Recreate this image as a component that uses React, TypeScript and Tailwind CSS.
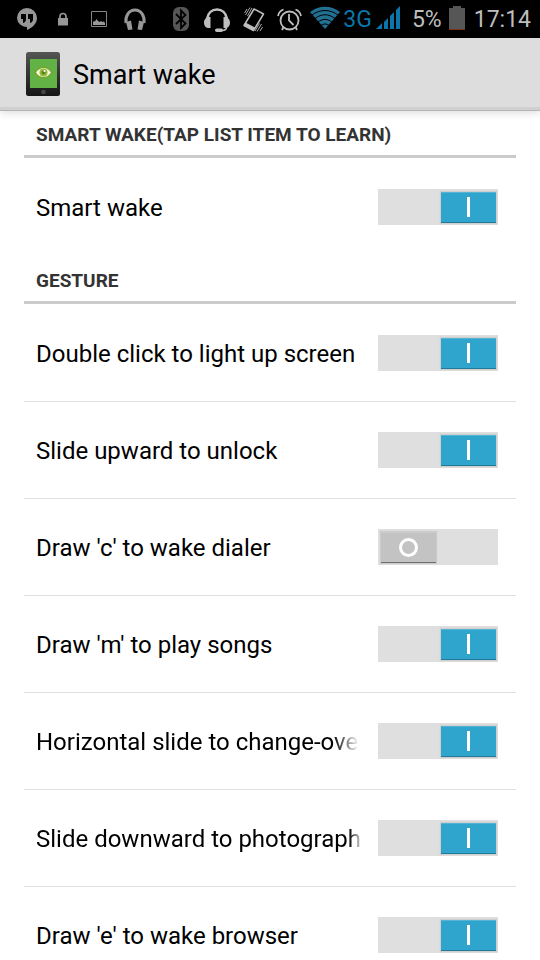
import { useState } from "react";
import type { ReactNode } from "react";

type Item = { label: string; on: boolean; fade?: string };

const wakeItems: Item[] = [{ label: "Smart wake", on: true }];

const gestureItems: Item[] = [
    { label: "Double click to light up screen", on: true },
    { label: "Slide upward to unlock", on: true },
    { label: "Draw 'c' to wake dialer", on: false },
    { label: "Draw 'm' to play songs", on: true },
    {
        label: "Horizontal slide to change-over",
        on: true,
        fade: "[mask-image:linear-gradient(to_left,transparent_4px,black_30px)]",
    },
    {
        label: "Slide downward to photograph",
        on: true,
        fade: "[mask-image:linear-gradient(to_left,transparent,black_14px)]",
    },
    { label: "Draw 'e' to wake browser", on: true },
];

const StatusIcon = ({ children }: { children: ReactNode }) => (
    <svg className="h-[38px] w-9 shrink-0" viewBox="0 0 36 38" fill="none" aria-hidden="true">
        {children}
    </svg>
);

const StatusBar = () => {
    return (
        <div className="flex h-[38px] shrink-0 items-center justify-between bg-black px-[9px] text-[23px] leading-7 text-[#bebebe]">
            <div className="flex">
                {/* hangouts */}
                <StatusIcon>
                    <path fill="#979797" d="M18 8a10 10 0 0 1 10 10c0 5-4 9.500-10 12v-3A9.500 9.500 0 0 1 8 18 10 10 0 0 1 18 8Z" />
                    <path fill="#000" d="M12 14h5v5c0 2-1 3.500-3 4v-4h-2Zm7 0h5v5c0 2-1 3.500-3 4v-4h-2Z" />
                </StatusIcon>
                {/* lock */}
                <StatusIcon>
                    <path fill="#979797" d="M13 18h10v7.500H13Z" />
                    <path stroke="#979797" strokeWidth="1.700" d="M15 18v-1.500a3 3 0 0 1 6 0V18" />
                </StatusIcon>
                {/* picture */}
                <StatusIcon>
                    <path stroke="#858585" d="M10.500 11.500h15v15h-15Z" />
                    <path fill="#979797" d="M12 25v-3l1-1 1 .5 1.500-2.500 1.500 2 1.500 1 1.500-1 1.500 1 1.500-.5 1 1.500v2Z" />
                </StatusIcon>
                {/* headphones */}
                <StatusIcon>
                    <path stroke="#979797" strokeWidth="3" d="M9 23c-1-7 3-13 9-13s10 6 9 13" />
                    <path fill="#979797" d="m9 22 5-1.500 1.500 9-4.500.5Zm18 0-5-1.500-1.500 9 4.500.5Z" />
                </StatusIcon>
            </div>
            <div className="flex items-center">
                {/* bluetooth */}
                <StatusIcon>
                    <rect x="10" y="7" width="16" height="24" rx="6" fill="#565656" />
                    <path stroke="#000" strokeWidth="1.800" d="m13 14 9.500 9.500-4.500 4.500V10.500l4.500 4.500L13 24" />
                </StatusIcon>
                {/* headset */}
                <StatusIcon>
                    <path stroke="#bebebe" strokeWidth="2.600" d="M8 19c1-6 5-9.500 10-9.500S27 13 28 19" />
                    <path fill="#bebebe" d="M11.500 17v11C7 28.500 5 26 5 22.500S7.500 17 11.500 17Zm13 0v11c4.500.5 6.500-2 6.500-5.500S28.500 17 24.500 17Z" />
                    <path stroke="#bebebe" strokeWidth="1.600" d="M27.500 27c0 2.500-1 3.500-4.500 3.500" />
                    <rect x="16" y="28.500" width="8" height="3.500" rx="1.700" fill="#bebebe" />
                </StatusIcon>
                {/* vibrate */}
                <StatusIcon>
                    <path stroke="#bebebe" strokeWidth="1.500" strokeLinejoin="round" d="m19 9 9.500 5-10 16.500-9.500-5Z" />
                    <path fill="#bebebe" d="m10.500 22.500 9.500 5-2 3-9-5Z" />
                    <path stroke="#bebebe" strokeWidth="0.900" d="m10.500 15 4.500-7.500M12.500 16l4.500-8M9.500 13l2.500-4M22 31.500l4.500-7.500M20 31l4.500-7.500M25 31l2.500-4" />
                </StatusIcon>
                {/* alarm */}
                <StatusIcon>
                    <circle cx="18.500" cy="20.500" r="9" stroke="#bebebe" strokeWidth="1.800" />
                    <path stroke="#bebebe" strokeWidth="1.800" d="M18 14v6.500l4.500 4.500M7 16c.5-3 2.500-5.500 5.500-6.500M30 16c-.5-3-2.500-5.500-5.500-6.500" />
                    <path stroke="#bebebe" strokeWidth="1.800" d="m12.500 27-1.500 3m13.500-3 1.500 3" />
                </StatusIcon>
                {/* wifi */}
                <StatusIcon>
                    <path fill="#226f91" d="M3 12C12 5 24 5 33 12L18 29Z" />
                    <path stroke="#000" strokeWidth="1" d="M5 15c8-6 18-6 26 0M8 18.500c6.500-5 13.500-5 20 0M11 22c4.500-3.500 9.500-3.500 14 0M14 25.500c2.500-2 5.500-2 8 0" />
                </StatusIcon>
                <span className="pt-0.5 text-[#0b76aa]">3G</span>
                {/* signal */}
                <svg className="ml-1 h-[38px] w-6" viewBox="0 0 24 38" fill="#0b76aa" aria-hidden="true">
                    <path d="M0 29l6-6v6ZM8 22l4-4v11H8Zm6-6 4-4v17h-4Zm6-6 4-4v23h-4Z" />
                </svg>
                <span className="ml-3 pt-0.5">5%</span>
                {/* battery */}
                <svg className="ml-[7px] h-[38px] w-4" viewBox="0 0 16 38" aria-hidden="true">
                    <path fill="#565656" d="M0 8h4V6h8v2h4v21H0Z" />
                    <path fill="#7d2f18" d="M0 29h16v1H0Z" />
                </svg>
                <span className="ml-[9px] pt-0.5">17:14</span>
            </div>
        </div>
    );
};

const AppIcon = () => (
    <svg className="h-11 w-[34px]" viewBox="0 0 34 44" aria-hidden="true">
        <defs>
            <linearGradient id="body" x1="0" y1="0" x2="0" y2="1">
                <stop offset="0" stopColor="#555755" />
                <stop offset="0.500" stopColor="#333533" />
                <stop offset="1" stopColor="#151515" />
            </linearGradient>
        </defs>
        <rect width="34" height="44" rx="2.500" fill="url(#body)" />
        <path fill="#62b246" d="M4 7h27v29H4Z" />
        <path fill="#77a52b" d="M8 20.500c5-8 14-8 19 0-5 8-14 8-19 0Z" />
        <path fill="#f4f8e4" d="M10 20.500c4-6 11-6 15 0-4 6-11 6-15 0Z" />
        <circle cx="17.500" cy="20.500" r="4" fill="#91bd35" />
        <circle cx="17.500" cy="20.500" r="2" fill="#5d8422" />
        <circle cx="18.500" cy="19" r="1" fill="#fff" />
        <circle cx="17.500" cy="40" r="2.300" fill="#454545" />
    </svg>
);

const ToggleRow = ({ label, on, fade = "" }: Item) => {
    const [checked, setChecked] = useState(on);

    return (
        <li>
            <label className="relative flex h-24 cursor-pointer items-center gap-[15px] pr-[18px] pl-3">
                <span className={`min-w-0 flex-1 overflow-hidden pt-0.5 text-2xl whitespace-nowrap text-black ${fade}`}>{label}</span>
                <input
                    type="checkbox"
                    role="switch"
                    className="peer sr-only"
                    checked={checked}
                    onChange={(e) => setChecked(e.target.checked)}
                />
                <span className="flex h-9 w-[120px] shrink-0 items-center justify-start bg-[#dfdfdf] pr-0.5 pl-[3px] peer-checked:justify-end peer-focus-visible:outline-2">
                    {checked ? (
                        <span className="flex h-[31px] w-[55px] items-center justify-center border-t border-b border-t-[#55b3d3] border-b-[#23799a] bg-[#2fa4cc] shadow-[0_0_1px_1px_#cfcfcf]">
                            <span className="h-5 w-[3px] bg-white"></span>
                        </span>
                    ) : (
                        <span className="flex h-[31px] w-[55px] items-center justify-center border-t border-b border-t-[#cccccc] border-b-[#6e6e6e] bg-[#c3c3c3] shadow-[0_0_1px_1px_#cccccc]">
                            <span className="size-[19px] rounded-full border-3 border-white"></span>
                        </span>
                    )}
                </span>
            </label>
        </li>
    );
};

const Section = ({ title, items }: { title: string; items: Item[] }) => (
    <section className="pb-px">
        <h2 className="flex h-12 items-center border-b-3 border-[#cbcbcb] pt-1 pl-3 text-[19px] leading-6 font-bold text-[#333333] uppercase">
            {title}
        </h2>
        <ul className="divide-y divide-[#e0e0e0] pt-px">
            {items.map((item) => (
                <ToggleRow key={item.label} {...item} />
            ))}
        </ul>
    </section>
);

const App = () => {
    return (
        <div className="flex h-screen flex-col bg-white font-[Roboto,sans-serif]">
            <StatusBar />
            <header className="z-10 flex h-[73px] shrink-0 items-center gap-[13px] border-b border-[#b5b5b5] bg-[#dddddd] px-[26px] shadow-[inset_0_-3px_0_#d0d0d0,0_2px_8px_#00000022]">
                <AppIcon />
                <h1 className="pt-0.5 text-[27px] leading-9 text-black">Smart wake</h1>
            </header>
            <main className="-mt-px flex-1 overflow-y-auto px-6 [scrollbar-width:none]">
                <Section title="Smart wake(tap list item to learn)" items={wakeItems} />
                <Section title="Gesture" items={gestureItems} />
            </main>
        </div>
    );
};

export default App;
